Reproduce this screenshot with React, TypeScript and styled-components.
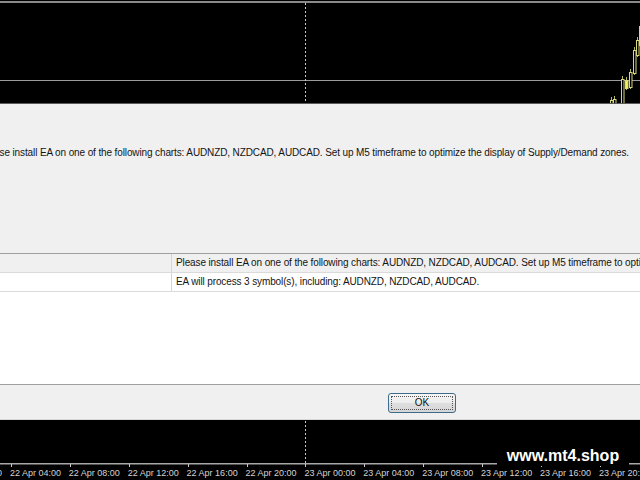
import styled, { createGlobalStyle } from 'styled-components';

const GlobalStyle = createGlobalStyle`
html, body {
  margin: 0;
  padding: 0;
  background: #000;
  overflow: hidden;
}
`

const Screen = styled.div`
display: flex;
flex-direction: column;
width: 640px;
height: 480px;
overflow: hidden;
background: #000;
font-family: 'Liberation Sans', Arial, sans-serif;
`

const ChartPane = styled.div<{ $h: number }>`
position: relative;
height: ${p => p.$h}px;
flex: none;
background: #000;
`

const ChartSvg = styled.svg`
display: block;
width: 640px;
height: 100%;
`

const Dialog = styled.div`
flex: none;
height: 316px;
margin: 0 -60px;
display: flex;
flex-direction: column;
background: #f0f0f0;
border-top: 1px solid #5c5c5c;
color: #141414;
font-size: 10px;
letter-spacing: -0.12px;
`

const Message = styled.div`
height: 149px;
flex: none;
box-sizing: border-box;
padding: 43px 0 0 40px;
line-height: 12px;
white-space: nowrap;
`

const LogTable = styled.div`
flex: 1;
background: #fff;
border-top: 1px solid #a0a0a0;
`

const LogRow = styled.div<{ $shade?: boolean }>`
display: grid;
grid-template-columns: 231px 1fr;
height: 18px;
border-bottom: 1px solid #dadada;
background: ${p => (p.$shade ? '#f0f0f0' : '#fff')};
`

const LogCell = styled.div`
padding-left: 4px;
line-height: 18px;
white-space: nowrap;
overflow: hidden;
border-left: 1px solid #d4d4d4;
&:first-child {
  border-left: none;
}
`

const Footer = styled.div`
flex: none;
height: 36px;
box-sizing: border-box;
border-top: 1px solid #a0a0a0;
border-bottom: 1px solid #d8d8d8;
padding: 8px 0 0 448px;
`

const OkButton = styled.button`
width: 68px;
height: 20px;
padding: 2px;
box-sizing: border-box;
border: 1px solid #3d6b8c;
border-radius: 3px;
background: linear-gradient(#f6f6f6, #ececec 50%, #dedede 51%, #d6d6d6);
font: 10px 'Liberation Sans', Arial, sans-serif;
color: #111;
cursor: pointer;
`

const FocusRing = styled.span`
display: block;
height: 100%;
box-sizing: border-box;
border: 1px dotted #555;
line-height: 12px;
`

const Watermark = styled.div`
position: absolute;
left: 497px;
top: 26px;
width: 132px;
height: 20px;
background: #000;
color: #fff;
font: bold 16px 'Liberation Sans', Arial, sans-serif;
line-height: 20px;
text-align: center;
`

const candles = [
  { x: 610, top: 100, bottom: 103, filled: false },
  { x: 613, top: 99, bottom: 103, filled: false },
  { x: 621, top: 79, bottom: 104, filled: false },
  { x: 625, top: 80, bottom: 88, filled: true },
  { x: 629, top: 72, bottom: 87, filled: false },
  { x: 633, top: 50, bottom: 73, filled: false },
  { x: 636, top: 40, bottom: 55, filled: false },
  { x: 639, top: 26, bottom: 45, filled: false },
]

const axisLabels = [
  '22 Apr 00:00', '22 Apr 04:00', '22 Apr 08:00', '22 Apr 12:00', '22 Apr 16:00', '22 Apr 20:00',
  '23 Apr 00:00', '23 Apr 04:00', '23 Apr 08:00', '23 Apr 12:00', '23 Apr 16:00', '23 Apr 20:00',
]

const TopChart = () => (
  <ChartPane $h={103}>
    <ChartSvg viewBox="0 0 640 103">
      <rect x="0" y="1" width="640" height="2" fill="#8a8a8a" />
      <rect x="0" y="80" width="640" height="1" fill="#9c9c9c" />
      <line x1="305.5" y1="3" x2="305.5" y2="103" stroke="#c8c8c8" strokeDasharray="2 2" />
      {candles.map((c, i) => (
        <g key={i}>
          <line x1={c.x + 1.5} y1={c.top - 3} x2={c.x + 1.5} y2={c.bottom + 2} stroke="#b8b860" />
          <rect
            x={c.x + 0.5}
            y={c.top + 0.5}
            width="2.5"
            height={c.bottom - c.top}
            fill={c.filled ? '#f4f25a' : '#000'}
            stroke="#d8d878"
          />
        </g>
      ))}
    </ChartSvg>
  </ChartPane>
)

const BottomChart = () => (
  <ChartPane $h={61}>
    <ChartSvg viewBox="0 0 640 61">
      <line x1="305.5" y1="1" x2="305.5" y2="43" stroke="#c8c8c8" strokeDasharray="2 2" />
      <rect x="0" y="43" width="640" height="1.5" fill="#a8a8a8" />
      {axisLabels.map((label, i) => {
        const x = -49 + i * 58.9
        return (
          <g key={label}>
            <rect x={Math.round(x) + 1} y="44" width="1" height="3" fill="#c8c8c8" />
            <text x={x} y="55.5" fill="#d4d4d4" fontSize="9" fontFamily="'Liberation Sans', Arial, sans-serif">
              {label}
            </text>
          </g>
        )
      })}
    </ChartSvg>
    <Watermark>www.mt4.shop</Watermark>
  </ChartPane>
)

const App = () => {
  return (
    <>
      <GlobalStyle />
      <Screen>
        <TopChart />
        <Dialog>
          <Message>
            Please install EA on one of the following charts: AUDNZD, NZDCAD, AUDCAD. Set up M5 timeframe to optimize the display of Supply/Demand zones.
          </Message>
          <LogTable>
            <LogRow $shade>
              <LogCell></LogCell>
              <LogCell>Please install EA on one of the following charts: AUDNZD, NZDCAD, AUDCAD. Set up M5 timeframe to optimize the display of Supply/Demand zones.</LogCell>
            </LogRow>
            <LogRow>
              <LogCell></LogCell>
              <LogCell>EA will process 3 symbol(s), including: AUDNZD, NZDCAD, AUDCAD.</LogCell>
            </LogRow>
          </LogTable>
          <Footer>
            <OkButton>
              <FocusRing>OK</FocusRing>
            </OkButton>
          </Footer>
        </Dialog>
        <BottomChart />
      </Screen>
    </>
  )
}

export default App
